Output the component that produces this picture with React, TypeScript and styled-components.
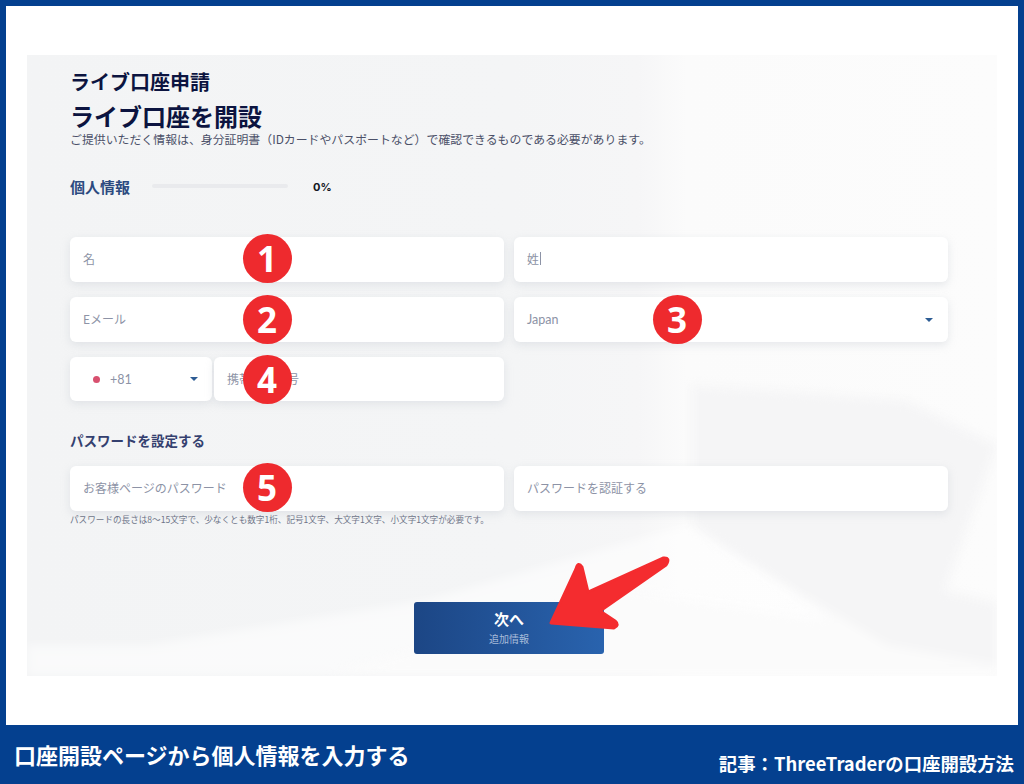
import React from "react";
import styled, { createGlobalStyle } from "styled-components";

const Global = createGlobalStyle`
  html, body { margin: 0; padding: 0; background: #04408f; }
  * { box-sizing: border-box; }
  body { font-family: "Noto Sans CJK JP", "Noto Sans", sans-serif; }
`;

const Frame = styled.div`
  position: relative;
  width: 1024px;
  height: 784px;
  display: flex;
  flex-direction: column;
  background: #04408f;
  padding-top: 6px;
  overflow: hidden;
`;

const Sheet = styled.main`
  height: 719px;
  margin: 0 6px;
  background: #fff;
  padding: 49px 21px 0;
`;

const Panel = styled.section`
  position: relative;
  isolation: isolate;
  height: 621px;
  padding: 14px 49px 0 43px;
  overflow: hidden;
  background: linear-gradient(90deg, #f3f4f5 0%, #f4f5f6 50%, #f6f6f7 63%, #fbfbfb 68%, #fcfcfc 100%);
`;

const BackdropBlur = styled.div`
  position: absolute;
  inset: 0;
  z-index: -1;
  filter: blur(5px);
`;

const BackdropShape = styled.div<{ $fill: string; $points: string }>`
  position: absolute;
  inset: 0;
  background: ${(p) => p.$fill};
  clip-path: polygon(${(p) => p.$points});
`;

const Breadcrumb = styled.h1`
  margin: 0;
  height: 26px;
  font-size: 20px;
  line-height: 26px;
  font-weight: 700;
  color: #0c1440;
`;

const Title = styled.h2`
  margin: 6px 0 0;
  height: 30px;
  font-size: 24px;
  line-height: 30px;
  font-weight: 700;
  color: #0c1440;
`;

const Lead = styled.p`
  margin: 0;
  height: 16px;
  font-size: 11.9px;
  line-height: 16px;
  color: #4b5068;
  white-space: nowrap;
`;

const ProgressRow = styled.div`
  display: flex;
  align-items: center;
  height: 20px;
  margin-top: 29px;
`;

const ProgressLabel = styled.span`
  width: 82px;
  font-size: 15px;
  font-weight: 700;
  color: #2c4a80;
`;

const Track = styled.div`
  width: 136px;
  height: 4px;
  border-radius: 2px;
  background: #e9eaed;
`;

const Percent = styled.span`
  margin-left: 25px;
  padding-top: 2px;
  font-family: "Inter", sans-serif;
  font-size: 11px;
  font-weight: 700;
  color: #15171f;
`;

const Grid = styled.div<{ $top: number }>`
  display: grid;
  grid-template-columns: 434px 434px;
  column-gap: 10px;
  row-gap: 15px;
  margin-top: ${(p) => p.$top}px;
`;

const Field = styled.div<{ $h?: number }>`
  display: flex;
  align-items: center;
  height: ${(p) => p.$h ?? 45}px;
  padding: 0 13px 2px;
  background: #fff;
  border-radius: 6px;
  box-shadow: 0 3px 8px rgba(190, 194, 202, 0.35);
  font-size: 12px;
  color: #8d93a6;
  white-space: nowrap;
`;

const SelectField = styled(Field)`
  justify-content: space-between;
  padding: 0 15px 0 13px;
  font-family: "Lato", "Noto Sans CJK JP", sans-serif;
  font-size: 12.5px;
`;

const Caret = styled.span`
  width: 0;
  height: 0;
  border-left: 4px solid transparent;
  border-right: 4px solid transparent;
  border-top: 4px solid #2d5c94;
`;

const PhoneCell = styled.div`
  display: flex;
  gap: 2px;
`;

const CodeField = styled(Field)`
  width: 142px;
  flex: none;
  padding: 0 14px 0 23px;
  font-family: "Lato", sans-serif;
`;

const Dot = styled.span`
  width: 7px;
  height: 7px;
  margin-right: 10px;
  border-radius: 50%;
  background: #d8506f;
`;

const CodeText = styled.span`
  flex: 1;
  font-size: 12.5px;
`;

const NumberField = styled(Field)`
  flex: 1;
`;

const Cursor = styled.span`
  width: 1px;
  height: 13px;
  margin-left: 1px;
  background: #8d93a6;
`;

const SectionLabel = styled.h3`
  margin: 29px 0 0;
  height: 20px;
  font-size: 13.5px;
  line-height: 20px;
  font-weight: 700;
  color: #34406f;
`;

const Hint = styled.p`
  margin: 1px 0 0;
  height: 14px;
  font-size: 8.6px;
  line-height: 14px;
  color: #6e7488;
  white-space: nowrap;
`;

const ButtonRow = styled.div`
  display: flex;
  justify-content: center;
  margin-top: 76px;
`;

const NextButton = styled.button`
  display: flex;
  flex-direction: column;
  align-items: center;
  justify-content: center;
  gap: 3px;
  width: 190px;
  height: 52px;
  border: 0;
  border-radius: 3px;
  padding: 0 0 2px;
  font-family: inherit;
  background: linear-gradient(90deg, #1c4685, #2963ae);
  color: #fff;
`;

const ButtonMain = styled.span`
  font-size: 15px;
  line-height: 20px;
  font-weight: 700;
`;

const ButtonSub = styled.span`
  font-size: 10px;
  line-height: 14px;
  color: #a8bcd9;
`;

const Footer = styled.footer`
  flex: 1;
  display: flex;
  justify-content: space-between;
  padding: 0 10px 0 14px;
  color: #fff;
  font-weight: 700;
`;

const Caption = styled.div`
  font-size: 22px;
  line-height: 28px;
  margin-top: 15px;
`;

const Source = styled.div`
  font-size: 18.4px;
  line-height: 24px;
  margin-top: 26px;
`;

const Badge = styled.span<{ $x: number; $y: number }>`
  position: absolute;
  left: ${(p) => p.$x - 24.5}px;
  top: ${(p) => p.$y - 24.5}px;
  width: 49px;
  height: 49px;
  display: flex;
  align-items: center;
  justify-content: center;
  border-radius: 50%;
  background: #ee2a2e;
  color: #fff;
  font-family: "Open Sans", "Noto Sans", sans-serif;
  font-size: 35px;
  font-weight: 700;
  line-height: 1;
`;

const ArrowSvg = styled.svg`
  position: absolute;
  left: 540px;
  top: 545px;
`;

const badges = [
  { n: 1, x: 267, y: 258 },
  { n: 2, x: 267, y: 319 },
  { n: 3, x: 677, y: 319 },
  { n: 4, x: 267, y: 379 },
  { n: 5, x: 267, y: 487 },
];

export default function App() {
  return (
    <Frame>
      <Global />
      <Sheet>
        <Panel>
          <BackdropBlur>
            <BackdropShape
              $fill="#f5f5f6"
              $points="665px 330px, 878px 345px, 970px 390px, 918px 535px, 970px 548px, 970px 621px, 300px 621px, 600px 535px, 800px 565px, 665px 470px"
            />
            <BackdropShape
              $fill="rgba(255, 255, 255, 0.55)"
              $points="0 590px, 120px 590px, 400px 545px, 660px 470px, 860px 590px, 970px 610px, 970px 640px, 0 640px"
            />
          </BackdropBlur>
          <Breadcrumb>ライブ口座申請</Breadcrumb>
          <Title>ライブ口座を開設</Title>
          <Lead>ご提供いただく情報は、身分証明書（IDカードやパスポートなど）で確認できるものである必要があります。</Lead>
          <ProgressRow>
            <ProgressLabel>個人情報</ProgressLabel>
            <Track />
            <Percent>0%</Percent>
          </ProgressRow>
          <Grid $top={41}>
            <Field>名</Field>
            <Field>姓<Cursor /></Field>
            <Field>Eメール</Field>
            <SelectField>Japan<Caret /></SelectField>
            <PhoneCell>
              <CodeField $h={44}>
                <Dot />
                <CodeText>+81</CodeText>
                <Caret />
              </CodeField>
              <NumberField $h={44}>携帯電話番号</NumberField>
            </PhoneCell>
          </Grid>
          <SectionLabel>パスワードを設定する</SectionLabel>
          <Grid $top={16}>
            <Field>お客様ページのパスワード</Field>
            <Field>パスワードを認証する</Field>
          </Grid>
          <Hint>パスワードの長さは8～15文字で、少なくとも数字1桁、記号1文字、大文字1文字、小文字1文字が必要です。</Hint>
          <ButtonRow>
            <NextButton>
              <ButtonMain>次へ</ButtonMain>
              <ButtonSub>追加情報</ButtonSub>
            </NextButton>
          </ButtonRow>
        </Panel>
      </Sheet>
      <Footer>
        <Caption>口座開設ページから個人情報を入力する</Caption>
        <Source>記事：ThreeTraderの口座開設方法</Source>
      </Footer>
      {badges.map((b) => (
        <Badge key={b.n} $x={b.x} $y={b.y}>{b.n}</Badge>
      ))}
      <ArrowSvg width="140" height="100" viewBox="0 0 140 100">
        <path
          d="M123 13 L48 47 L42 22 Q38 16 36 24 L11 78 L74 83 Q80 80 75 76 L60 66 L126 20 Q131 12 123 13 Z"
          fill="#f42c2f"
          stroke="#f42c2f"
          strokeWidth="3"
          strokeLinejoin="round"
        />
      </ArrowSvg>
    </Frame>
  );
}
